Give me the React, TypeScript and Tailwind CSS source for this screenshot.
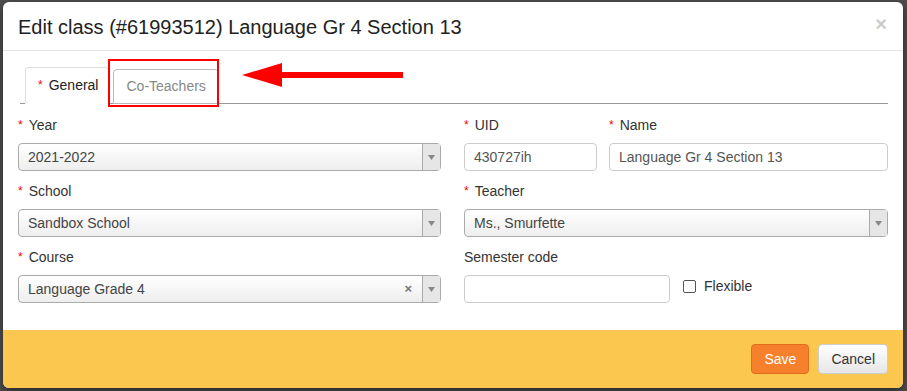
import React from 'react';

const Req: React.FC = () => <span className="text-[#ff0000] text-[12px] mr-[6px] relative -top-[1px]">*</span>;

const Label: React.FC<{ text: string; req?: boolean }> = ({ text, req }) => (
    <div className="h-[17px] mb-[9px] text-[14px] leading-[17px] text-[#333]">
        {req && <Req />}
        {text}
    </div>
);

const Chosen: React.FC<{ value: string; clear?: boolean }> = ({ value, clear }) => (
    <div className="flex h-[28px] items-center rounded-[4px] border border-[#aaa] bg-gradient-to-b from-white to-[#eeeeee] text-[14px] text-[#444]">
        <span className="flex-1 pl-[9px]">{value}</span>
        {clear && <span className="mr-[10px] text-[13px] font-bold text-[#777]">×</span>}
        <span className="flex h-full w-[18px] items-center justify-center border-l border-[#aaa] bg-[#e6e6e6]">
            <svg width="7" height="5" viewBox="0 0 7 5"><path d="M0 0h7L3.5 5z" fill="#888" /></svg>
        </span>
    </div>
);

const Input: React.FC<{ value?: string; className?: string }> = ({ value, className }) => (
    <div className={`flex h-[28px] items-center rounded-[4px] border border-[#ccc] bg-white pl-[9px] text-[14px] text-[#555] ${className || ''}`}>
        {value}
    </div>
);

export default function App() {
    return (
        <div className="min-h-[391px] w-[907px] bg-[#4e4e4e] pt-[2px] pl-[3px] font-['Liberation_Sans',Arial,sans-serif]">
            <div className="w-[900px] overflow-hidden rounded-[6px] bg-white shadow-[0_3px_9px_rgba(0,0,0,0.5)]">
                {/* header */}
                <div className="flex h-[49px] items-center justify-between border-b border-[#e5e5e5] pl-[15px] pr-[16px]">
                    <h4 className="text-[20px] text-[#222] pt-[1px]">Edit class (#61993512) Language Gr 4 Section 13</h4>
                    <span className="text-[20px] font-bold leading-none text-[#ccc] -mt-[4px]">×</span>
                </div>

                {/* body */}
                <div className="px-[15px] pt-[16px] pb-[27px]">
                    <div className="relative flex h-[37px] items-end border-b border-[#999] pl-[5px] ml-[2px]">
                        <div className="-mb-px flex h-[37px] items-center rounded-t-[4px] border border-b-white border-[#ddd] bg-white pl-[12px] pr-[10px] text-[14px] text-[#222]">
                            <Req />General
                        </div>
                        <div className="ml-[4px] -mb-[1px] flex h-[35px] items-center rounded-t-[4px] border border-[#bbb] px-[12px] text-[14px] text-[#888]">
                            Co-Teachers
                        </div>
                        {/* annotation */}
                        <div className="absolute left-[88px] -top-[8px] h-[48px] w-[111px] border-2 border-[#ff0000]" />
                        <svg className="absolute left-[222px] -top-[5px]" width="164" height="26" viewBox="0 0 164 26">
                            <path d="M0 13 L40 1 L40 10 L161 10 L161 16 L40 16 L40 25 Z" fill="#ff0000" />
                        </svg>
                    </div>

                    <div className="mt-[13px] grid grid-cols-[423px_424px] gap-x-[23px]">
                        <div className="flex flex-col">
                            <Label text="Year" req />
                            <Chosen value="2021-2022" />
                            <div className="h-[12px]" />
                            <Label text="School" req />
                            <Chosen value="Sandbox School" />
                            <div className="h-[12px]" />
                            <Label text="Course" req />
                            <Chosen value="Language Grade 4" clear />
                        </div>
                        <div className="flex flex-col">
                            <div className="flex gap-[12px]">
                                <div className="w-[133px]">
                                    <Label text="UID" req />
                                    <Input value="430727ih" />
                                </div>
                                <div className="flex-1">
                                    <Label text="Name" req />
                                    <Input value="Language Gr 4 Section 13" />
                                </div>
                            </div>
                            <div className="h-[12px]" />
                            <Label text="Teacher" req />
                            <Chosen value="Ms., Smurfette" />
                            <div className="h-[12px]" />
                            <Label text="Semester code" />
                            <div className="flex items-start">
                                <Input className="w-[206px]" />
                                <label className="ml-[13px] mt-[1px] flex items-center gap-[8px] text-[14px] text-[#333]">
                                    <span className="h-[13px] w-[13px] rounded-[2px] border border-[#555] bg-white" />
                                    Flexible
                                </label>
                            </div>
                        </div>
                    </div>
                </div>

                {/* footer */}
                <div className="flex h-[58px] items-center justify-end gap-[9px] bg-[#fbc74f] pr-[15px]">
                    <button className="h-[30px] rounded-[4px] border border-[#e06c1c] bg-[#f6802b] px-[12px] text-[14px] text-white">Save</button>
                    <button className="h-[30px] rounded-[4px] border border-[#ccc] bg-gradient-to-b from-white to-[#e6e6e6] px-[12px] text-[14px] text-[#333]">Cancel</button>
                </div>
            </div>
        </div>
    );
}
